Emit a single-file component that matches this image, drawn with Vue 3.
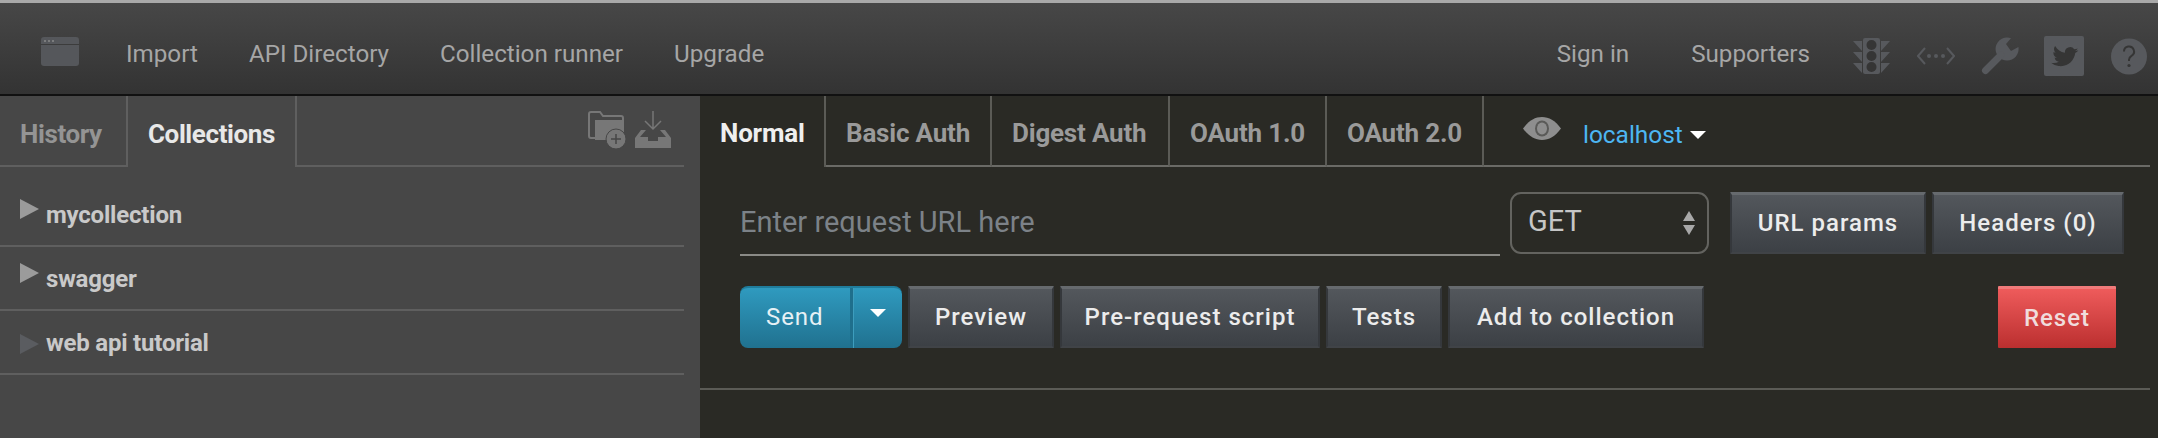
<script setup>
const navLeft = ["Import", "API Directory", "Collection runner", "Upgrade"];
const authTabs = ["Basic Auth", "Digest Auth", "OAuth 1.0", "OAuth 2.0"];
const collections = [
  { name: "mycollection", dim: false },
  { name: "swagger", dim: false },
  { name: "web api tutorial", dim: true },
];
const actions = ["Preview", "Pre-request script", "Tests", "Add to collection"];
</script>

<template>
  <div class="page">
    <div class="strip"></div>
    <header class="topbar">
      <svg class="window-icon" width="38" height="29" viewBox="0 0 38 29">
        <rect width="38" height="29" rx="3" fill="#55575b" />
        <rect y="7" width="38" height="1" fill="#3c3c3c" />
        <circle cx="4" cy="4" r="1" fill="#888" />
        <circle cx="8" cy="4" r="1" fill="#888" />
        <circle cx="12" cy="4" r="1" fill="#888" />
      </svg>
      <a v-for="item in navLeft" :key="item" class="nav-link">{{ item }}</a>
      <div class="top-right">
        <a class="nav-link sign">Sign in</a>
        <a class="nav-link supporters">Supporters</a>
        <svg class="traffic" width="38" height="38" viewBox="0 0 38 38">
          <rect x="10" y="1" width="17" height="36" rx="2" fill="#57595d" />
          <circle cx="18.500" cy="8" r="5" fill="#353535" />
          <circle cx="18.500" cy="19" r="5" fill="#353535" />
          <circle cx="18.500" cy="30" r="5" fill="#353535" />
          <path d="M0 4h9v10zM0 15h9v10zM0 26h9v10zM37 4h-9v10zM37 15h-9v10zM37 26h-9v10z" fill="#57595d" />
        </svg>
        <svg class="code" width="38" height="20" viewBox="0 0 38 20">
          <path d="M8 2 1 10l7 8M30 2l7 8-7 8" fill="none" stroke="#57595d" stroke-width="2" />
          <circle cx="12" cy="10" r="2" fill="#57595d" />
          <circle cx="19" cy="10" r="2" fill="#57595d" />
          <circle cx="26" cy="10" r="2" fill="#57595d" />
        </svg>
        <svg class="wrench" width="38" height="38" viewBox="0 0 38 38">
          <path d="M30 1.200 25 7l5 7 7.400-4A11.500 11.500 0 1 1 30 1.200Z" fill="#57595d" />
          <path d="M4.500 33.500 20 18" stroke="#57595d" stroke-width="7" stroke-linecap="round" />
        </svg>
        <svg class="twitter" width="40" height="40" viewBox="0 0 40 40">
          <rect width="40" height="40" rx="2" fill="#57595d" />
          <g transform="translate(8 8) scale(1.05) rotate(8 12 12)">
            <path fill="#353535" d="M23.953 4.570a10 10 0 01-2.825.775 4.958 4.958 0 002.163-2.723c-.951.555-2.005.959-3.127 1.184a4.920 4.920 0 00-8.384 4.482C7.690 8.095 4.067 6.130 1.640 3.162a4.822 4.822 0 00-.666 2.475c0 1.710.870 3.213 2.188 4.096a4.904 4.904 0 01-2.228-.616v.060a4.923 4.923 0 003.946 4.827 4.996 4.996 0 01-2.212.085 4.936 4.936 0 004.604 3.417 9.867 9.867 0 01-6.102 2.105c-.390 0-.779-.023-1.170-.067a13.995 13.995 0 007.557 2.209c9.053 0 13.998-7.496 13.998-13.985 0-.210 0-.420-.015-.630A9.935 9.935 0 0024 4.590z" />
          </g>
        </svg>
        <svg class="help" width="36" height="37" viewBox="0 0 36 37">
          <circle cx="18" cy="18.500" r="18" fill="#57595d" />
          <path d="M13 13.500a5 5 0 1 1 7.500 4.300c-1.600 1-2.500 1.800-2.500 4v1.200" fill="none" stroke="#353535" stroke-width="2" />
          <circle cx="18" cy="27.500" r="1.600" fill="#353535" />
        </svg>
      </div>
    </header>

    <main class="body">
      <aside class="sidebar">
        <div class="side-tabs">
          <div class="side-tab history">History</div>
          <div class="side-tab collections">Collections</div>
          <div class="side-tools">
            <svg width="38" height="38" viewBox="0 0 38 38">
              <path d="M3 1h9l3 4h18a2 2 0 0 1 2 2v20H3a2 2 0 0 1-2-2V3a2 2 0 0 1 2-2Z" fill="none" stroke="#777" stroke-width="2" />
              <rect x="7" y="9" width="28" height="20" fill="#777" />
              <circle cx="28" cy="28" r="10" fill="#777" stroke="#474747" stroke-width="1" />
              <path d="M23 28h10M28 23v10" stroke="#474747" stroke-width="1.500" />
            </svg>
            <svg width="38" height="38" viewBox="0 0 38 38">
              <path d="M19 0v17M11 10l8 8 8-8" fill="none" stroke="#777" stroke-width="1.500" />
              <path d="M7 19h5l-6 7h8v4h10v-4h8l-6-7h5l6 8v10H1V27Z" fill="#777" />
            </svg>
          </div>
        </div>
        <ul class="collection-list">
          <li v-for="c in collections" :key="c.name" class="collection">
            <span class="arrow" :class="{ dim: c.dim }"></span>
            <span class="collection-name">{{ c.name }}</span>
          </li>
        </ul>
      </aside>

      <section class="content">
        <div class="auth-tabs">
          <div class="auth-tab normal">Normal</div>
          <div v-for="t in authTabs" :key="t" class="auth-tab">{{ t }}</div>
          <div class="env">
            <svg class="eye" width="38" height="23" viewBox="0 0 38 23">
              <path d="M0 11.500C6 3.500 12 0 19 0s13 3.500 19 11.500C32 19.500 26 23 19 23S6 19.500 0 11.500Z" fill="#8e8e8e" />
              <ellipse cx="19" cy="11.500" rx="7" ry="8" fill="#5a5a58" />
              <ellipse cx="19" cy="11.500" rx="5" ry="6" fill="#8e8e8e" />
            </svg>
            <span class="env-name">localhost</span>
            <span class="caret"></span>
          </div>
        </div>

        <div class="request-row">
          <div class="url-field">Enter request URL here</div>
          <div class="method">
            <span>GET</span>
            <span class="stepper"><i class="up"></i><i class="down"></i></span>
          </div>
          <button class="btn url-params">URL params</button>
          <button class="btn headers">Headers (0)</button>
        </div>

        <div class="action-row">
          <div class="send-group">
            <div class="send">Send</div>
            <div class="send-drop"><span class="caret"></span></div>
          </div>
          <button v-for="a in actions" :key="a" class="btn">{{ a }}</button>
          <button class="btn reset">Reset</button>
        </div>

        <div class="rule"></div>
      </section>
    </main>
  </div>
</template>

<style>
html,
body {
  margin: 0;
  background: #2a2a25;
}
</style>

<style scoped>
.page {
  width: 2158px;
  height: 438px;
  overflow: hidden;
  font-family: Roboto, "Liberation Sans", sans-serif;
}
.strip {
  height: 3px;
  background: #a9a9a9;
}
.topbar {
  height: 91px;
  box-sizing: content-box;
  display: flex;
  align-items: center;
  padding-left: 41px;
  background: linear-gradient(#474747, #333333);
  border-bottom: 2px solid #111111;
}
.window-icon {
  margin-right: 47px;
  margin-top: 5px;
}
.nav-link {
  color: #a6a6a6;
  font-size: 24.200px;
  margin-right: 51px;
  margin-top: 10px;
}
.top-right {
  margin-left: auto;
  display: flex;
  align-items: center;
  margin-top: 15px;
}
.top-right .nav-link {
  margin-top: -5px;
}
.sign {
  margin-right: 62px !important;
}
.supporters {
  margin-right: 43px !important;
}
.code {
  margin-left: 26px;
}
.wrench {
  margin-left: 26px;
}
.twitter {
  margin-left: 25px;
}
.help {
  margin-left: 27px;
  margin-right: 11px;
}
.body {
  display: flex;
  height: 342px;
}
.sidebar {
  width: 700px;
  flex-shrink: 0;
  background: #474747;
}
.side-tabs {
  display: flex;
  height: 71px;
  width: 684px;
}
.side-tab {
  box-sizing: border-box;
  height: 71px;
  padding: 6px 0 0 20px;
  line-height: 65px;
  font-size: 26px;
  font-weight: 700;
  letter-spacing: -0.4px;
}
.history {
  width: 128px;
  color: #949494;
  border-right: 2px solid #5f5f5f;
  border-bottom: 2px solid #5f5f5f;
}
.collections {
  width: 169px;
  color: #e8e8e8;
  border-right: 2px solid #5f5f5f;
}
.side-tools {
  flex: 1;
  display: flex;
  justify-content: flex-end;
  gap: 8px;
  padding: 15px 12px 0 0;
  box-sizing: border-box;
  border-bottom: 2px solid #5f5f5f;
}
.collection-list {
  list-style: none;
  margin: 0;
  padding: 16px 0 0;
  width: 684px;
}
.collection {
  box-sizing: border-box;
  height: 64px;
  display: flex;
  align-items: center;
  padding: 2px 0 0 20px;
  border-bottom: 2px solid #5f5f5f;
}
.arrow {
  width: 0;
  height: 0;
  margin-right: 7px;
  margin-bottom: 12px;
  border-left: 19px solid #9b9b9b;
  border-top: 10px solid transparent;
  border-bottom: 10px solid transparent;
}
.arrow.dim {
  margin-bottom: 0;
  margin-top: 2px;
  border-left-color: #5a5c60;
}
.collection-name {
  color: #c9c9c9;
  font-size: 24px;
  font-weight: 700;
  letter-spacing: -0.2px;
}
.content {
  flex: 1;
  padding-right: 8px;
  min-width: 0;
  background: #2a2a25;
}
.auth-tabs {
  display: flex;
  height: 71px;
}
.auth-tab {
  box-sizing: border-box;
  height: 71px;
  width: 157px;
  padding: 6px 0 0 20px;
  line-height: 63px;
  color: #9a9a9a;
  font-size: 26px;
  font-weight: 700;
  letter-spacing: -0.2px;
  white-space: nowrap;
  border-right: 2px solid #5b5b56;
  border-bottom: 2px solid #6a6a66;
}
.auth-tab:nth-child(2) {
  width: 166px;
}
.auth-tab:nth-child(3) {
  width: 178px;
}
.auth-tab.normal {
  width: 126px;
  color: #efefef;
  border-bottom: 0;
}
.env {
  flex: 1;
  display: flex;
  align-items: center;
  padding: 8px 0 0 39px;
  border-bottom: 2px solid #6a6a66;
}
.eye {
  margin-top: -12px;
}
.env-name {
  color: #4db6f2;
  font-size: 24.400px;
  margin-left: 22px;
  margin-right: 7px;
}
.caret {
  display: inline-block;
  width: 0;
  height: 0;
  border-left: 8px solid transparent;
  border-right: 8px solid transparent;
  border-top: 8px solid #ffffff;
}
.request-row {
  display: flex;
  padding: 25px 0 0 40px;
}
.url-field {
  box-sizing: border-box;
  width: 760px;
  height: 64px;
  line-height: 60px;
  color: #7c8288;
  font-size: 29px;
  border-bottom: 2px solid #8a8a86;
}
.method {
  box-sizing: border-box;
  width: 199px;
  height: 62px;
  margin-left: 10px;
  margin-right: 21px;
  padding: 0 12px 0 16px;
  display: flex;
  align-items: center;
  justify-content: space-between;
  color: #c6c6c6;
  font-size: 29px;
  border: 2px solid #63635f;
  border-radius: 11px;
}
.method span:first-child {
  margin-bottom: 4px;
}
.stepper {
  display: flex;
  flex-direction: column;
  gap: 4px;
}
.stepper i {
  width: 0;
  height: 0;
  border-left: 6.500px solid transparent;
  border-right: 6.500px solid transparent;
}
.stepper .up {
  border-bottom: 10px solid #a8a8a8;
}
.stepper .down {
  border-top: 10px solid #a8a8a8;
}
.btn {
  box-sizing: border-box;
  height: 62px;
  padding: 0 0 2px;
  margin: 0 6px 0 0;
  color: #ececec;
  font-family: inherit;
  font-size: 24px;
  font-weight: 500;
  letter-spacing: 1px;
  white-space: nowrap;
  background: linear-gradient(#53575c, #3c4045);
  border: 2px solid #35383c;
  border-top: 3px solid #666a6e;
  border-bottom: 2px solid #404347;
  border-radius: 1px;
}
.action-row .btn:nth-child(2) {
  width: 146px;
}
.action-row .btn:nth-child(3) {
  width: 260px;
}
.action-row .btn:nth-child(4) {
  width: 116px;
}
.action-row .btn:nth-child(5) {
  width: 256px;
}
.url-params {
  width: 196px;
}
.headers {
  width: 192px;
  margin-right: 0;
}
.action-row {
  display: flex;
  padding: 30px 34px 0 40px;
}
.send-group {
  display: flex;
  width: 162px;
  height: 62px;
  margin-right: 6px;
  border-radius: 8px;
  overflow: hidden;
  background: linear-gradient(#2f9abf, #20718f);
  border-top: 2px solid #1f7c9c;
  box-sizing: border-box;
  color: #e6f1f5;
  font-size: 24px;
  letter-spacing: 0.9px;
}
.send {
  width: 113px;
  padding-left: 26px;
  box-sizing: border-box;
  line-height: 58px;
  border-right: 3px solid #1f6f8c;
}
.send-drop {
  flex: 1;
  display: flex;
  align-items: center;
  justify-content: center;
  border-left: 1px solid #3d9dbd;
  padding-bottom: 10px;
  box-sizing: border-box;
}
.action-row .reset {
  margin: 0 0 0 auto;
  width: 118px;
  color: #f0dcdc;
  background: linear-gradient(#ee5b5b, #bb2f2f);
  border: 0;
  border-top: 3px solid #f07a7a;
}
.rule {
  height: 2px;
  margin-top: 40px;
  background: #5b5b56;
}
</style>
